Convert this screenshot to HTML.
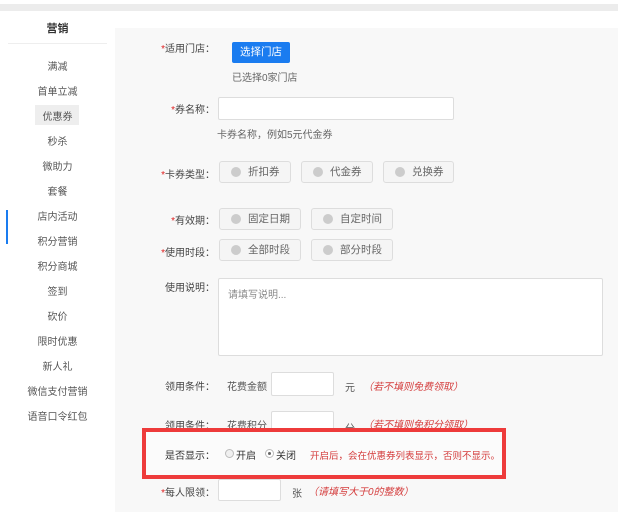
<!DOCTYPE html>
<html><head><meta charset="utf-8"><style>
*{margin:0;padding:0;box-sizing:border-box}
body{width:618px;height:512px;overflow:hidden;background:#fff;font-family:"Liberation Sans","Noto Sans CJK SC",sans-serif;font-size:10px;color:#555;position:relative}
.a{position:absolute;white-space:nowrap}
.top{left:0;top:4px;width:618px;height:7px;background:#ececec}
.side{left:8px;top:11px;width:99px;height:501px;background:#fff}
.main{left:115px;top:28px;width:503px;height:484px;background:#f8f8f8}
.mi{left:8px;width:99px;text-align:center;font-size:10px;color:#555}
.lbl{text-align:right;width:120px;font-size:10px;color:#444}
.lbl b{color:#e02020;font-weight:normal}
.inp{background:#fff;border:1px solid #ddd;border-radius:2px}
.opt{background:#f5f5f5;border:1px solid #ddd;border-radius:3px;font-size:10.5px;color:#666;line-height:20px;padding-left:28px}
.opt:before{content:"";position:absolute;left:11px;top:5px;width:10px;height:10px;border-radius:50%;background:#ccc}
.red{color:#d43c3c;font-style:italic}
</style></head><body>
<div class="a top"></div>
<div class="a side"></div>
<div class="a" style="left:8px;top:43px;width:99px;height:1px;background:#eee"></div>
<div class="a mi" style="top:20px;font-weight:bold;color:#333;font-size:11px">营销</div>
<div class="a" style="left:35px;top:105px;width:44px;height:20px;background:#eee"></div>
<div class="a" style="left:6px;top:210px;width:2px;height:34px;background:#1a7cf0"></div>
<div class="a mi" style="top:58px">满减</div>
<div class="a mi" style="top:83px">首单立减</div>
<div class="a mi" style="top:108px">优惠券</div>
<div class="a mi" style="top:133px">秒杀</div>
<div class="a mi" style="top:158px">微助力</div>
<div class="a mi" style="top:183px">套餐</div>
<div class="a mi" style="top:208px">店内活动</div>
<div class="a mi" style="top:233px">积分营销</div>
<div class="a mi" style="top:258px">积分商城</div>
<div class="a mi" style="top:283px">签到</div>
<div class="a mi" style="top:308px">砍价</div>
<div class="a mi" style="top:333px">限时优惠</div>
<div class="a mi" style="top:358px">新人礼</div>
<div class="a mi" style="top:383px">微信支付营销</div>
<div class="a mi" style="top:408px">语音口令红包</div>
<div class="a main"></div>

<div class="a lbl" style="left:95px;top:40px"><b>*</b>适用门店：</div>
<div class="a" style="left:232px;top:42px;width:58px;height:21px;background:#1a7cf0;border-radius:2px;color:#fff;text-align:center;line-height:21px;font-size:10.5px">选择门店</div>
<div class="a" style="left:232px;top:69px;color:#666">已选择0家门店</div>

<div class="a lbl" style="left:95px;top:101px"><b>*</b>券名称：</div>
<div class="a inp" style="left:218px;top:97px;width:236px;height:23px"></div>
<div class="a" style="left:217px;top:126px;color:#666">卡券名称，例如5元代金券</div>

<div class="a lbl" style="left:95px;top:166px"><b>*</b>卡券类型：</div>
<div class="a opt" style="left:219px;top:161px;width:72px;height:22px">折扣券</div>
<div class="a opt" style="left:301px;top:161px;width:72px;height:22px">代金券</div>
<div class="a opt" style="left:383px;top:161px;width:71px;height:22px">兑换券</div>

<div class="a lbl" style="left:95px;top:212px"><b>*</b>有效期：</div>
<div class="a opt" style="left:219px;top:208px;width:82px;height:22px">固定日期</div>
<div class="a opt" style="left:311px;top:208px;width:82px;height:22px">自定时间</div>
<div class="a lbl" style="left:95px;top:244px"><b>*</b>使用时段：</div>
<div class="a opt" style="left:219px;top:239px;width:82px;height:22px">全部时段</div>
<div class="a opt" style="left:311px;top:239px;width:82px;height:22px">部分时段</div>

<div class="a lbl" style="left:95px;top:279px">使用说明：</div>
<div class="a inp" style="left:218px;top:278px;width:385px;height:78px"></div>
<div class="a" style="left:228px;top:286px;color:#888">请填写说明...</div>

<div class="a lbl" style="left:95px;top:378px">领用条件：</div>
<div class="a" style="left:227px;top:378px">花费金额</div>
<div class="a inp" style="left:271px;top:372px;width:63px;height:24px"></div>
<div class="a" style="left:345px;top:379px">元</div>
<div class="a red" style="left:363px;top:378px">（若不填则免费领取）</div>

<div class="a lbl" style="left:95px;top:417px">领用条件：</div>
<div class="a" style="left:227px;top:417px">花费积分</div>
<div class="a inp" style="left:271px;top:411px;width:63px;height:24px"></div>
<div class="a" style="left:345px;top:420px">分</div>
<div class="a red" style="left:363px;top:416px">（若不填则免积分领取）</div>

<div class="a" style="left:142px;top:428px;width:364px;height:51px;border:4px solid #ee3b3b;background:#fbfbfb"></div>
<div class="a lbl" style="left:95px;top:447px;color:#333">是否显示：</div>
<div class="a" style="left:225px;top:449px;width:9px;height:9px;border-radius:50%;border:1px solid #bbb;background:#f0f0f0"></div>
<div class="a" style="left:236px;top:447px;color:#333">开启</div>
<div class="a" style="left:265px;top:449px;width:9px;height:9px;border-radius:50%;border:1px solid #bbb;background:#fff"><div style="margin:2px;width:3px;height:3px;border-radius:50%;background:#666"></div></div>
<div class="a" style="left:276px;top:447px;color:#333">关闭</div>
<div class="a" style="left:310px;top:448px;color:#d43c3c;font-size:9.5px">开启后，会在优惠券列表显示，否则不显示。</div>

<div class="a lbl" style="left:95px;top:484px"><b>*</b>每人限领：</div>
<div class="a inp" style="left:218px;top:479px;width:63px;height:22px"></div>
<div class="a" style="left:292px;top:485px">张</div>
<div class="a red" style="left:308px;top:483px">（请填写大于0的整数）</div>
</body></html>
